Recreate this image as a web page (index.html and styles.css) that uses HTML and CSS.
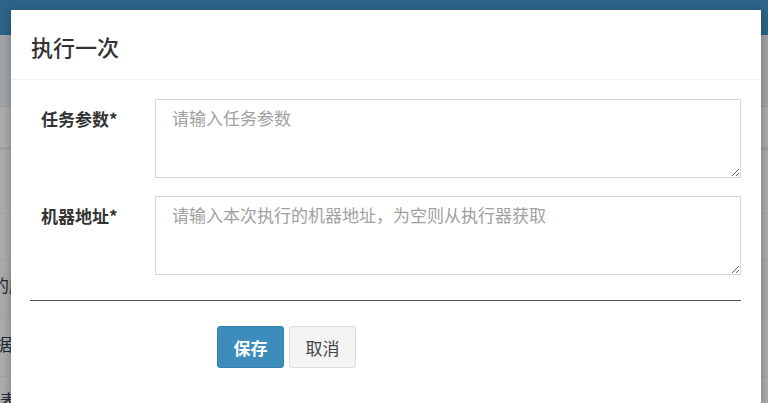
FILE: index.html
```html
<!DOCTYPE html>
<html lang="zh-CN">
  <head>
    <meta charset="UTF-8" />
    <meta name="viewport" content="width=device-width, initial-scale=1.0" />
    <title>执行一次</title>
    <link rel="stylesheet" href="styles.css">
  </head>
  <body>
    <!-- page behind the dialog (already dimmed by the backdrop) -->
    <div class="page">
      <div class="topbar"></div>
      <div class="content">
        <div class="box-head"></div>
        <div class="box">
          <div class="box-title"></div>
          <div class="row row-a"></div>
          <div class="row row-b"></div>
          <div class="row row-c"><span class="cell cell-c">目的服务</span></div>
          <div class="row row-d"><span class="cell cell-d">数据库</span></div>
          <div class="row row-e"><span class="cell cell-e">表名称</span></div>
        </div>
      </div>
    </div>

    <!-- Modal: 执行一次 -->
    <div class="modal-dialog">
      <div class="modal-header">
        <h4 class="modal-title">执行一次</h4>
      </div>
      <div class="modal-body">
        <form class="form">
          <div class="form-group">
            <label class="control-label">任务参数*</label>
            <textarea class="form-control" placeholder="请输入任务参数"></textarea>
          </div>
          <div class="form-group">
            <label class="control-label">机器地址*</label>
            <textarea class="form-control" placeholder="请输入本次执行的机器地址，为空则从执行器获取"></textarea>
          </div>
          <hr />
          <div class="actions">
            <button type="button" class="btn btn-primary">保存</button>
            <button type="button" class="btn btn-default">取消</button>
          </div>
        </form>
      </div>
    </div>
  </body>
</html>
```

FILE: styles.css
```css
/* Base */
html,
body {
  margin: 0;
  height: 100%;
  overflow: hidden;
}

body {
  font-family: "Noto Sans CJK SC", "Noto Sans", "Liberation Sans", sans-serif;
  color: #333;
  background-color: #a2a5a7;
}

/* Page under the backdrop */
.topbar {
  height: 35px;
  background-color: #2b6488;
}

.box-head {
  height: 71px;
  border-bottom: 1px solid #9c9fa1;
}

.box {
  background-color: #acacac;
}

.box-title {
  height: 40px;
  border-bottom: 3px solid #a0a0a0;
}

.row {
  border-bottom: 1px solid #a4a4a4;
  display: flex;
  align-items: center;
  font-size: 17px;
  color: #1f2a36;
}

.row-a {
  height: 63px;
}

.row-b {
  height: 45px;
}

.row-c {
  height: 59px;
  padding-bottom: 0;
  background-color: #a9a9a9;
}

.row-d {
  height: 56px;
}

.row-e {
  height: 40px;
  align-items: flex-start;
}

.cell {
  white-space: nowrap;
}

.cell-c {
  margin: 0 0 10px -25px;
}

.cell-d {
  margin: 0 0 10px -22px;
}

.cell-e {
  margin: 10px 0 0 0;
}

/* Modal */
.modal-dialog {
  position: absolute;
  top: 10px;
  left: 11px;
  width: 750px;
  bottom: -40px;
  background-color: #fff;
  box-shadow: 0 3px 9px rgba(0, 0, 0, 0.3);
}

.modal-header {
  padding: 20px 20px 17px;
  border-bottom: 1px solid #f0f0f0;
}

.modal-title {
  margin: 0;
  font-size: 22px;
  line-height: 32px;
  font-weight: 500;
  color: #333;
}

.modal-body {
  padding: 19px 20px 20px 19px;
}

.form-group {
  display: grid;
  grid-template-columns: 125px 1fr;
  margin-bottom: 18px;
}

.form-group:last-of-type {
  margin-bottom: 0;
}

.control-label {
  padding: 8px 0 0 11px;
  font-size: 17px;
  line-height: 24px;
  font-weight: bold;
  color: #333;
}

.form-control {
  box-sizing: border-box;
  height: 79px;
  margin: 0;
  padding: 6px 16px;
  border: 1px solid #d2d6de;
  border-radius: 0;
  font-family: inherit;
  font-size: 17px;
  line-height: 24px;
  color: #555;
  resize: vertical;
}

.form-control::placeholder {
  color: #a0a0a0;
}

hr {
  margin: 25px 0 0;
  border: 0;
  border-top: 1px solid #555;
}

.actions {
  display: flex;
  gap: 5px;
  margin: 25px 0 0 187px;
}

/* Buttons */
.btn {
  box-sizing: border-box;
  height: 42px;
  padding: 0 15px;
  border-radius: 3px;
  font-family: inherit;
  font-size: 17px;
  cursor: pointer;
}

.btn-primary {
  width: 67px;
  background-color: #3c8dbc;
  border: 1px solid #367fa9;
  color: #fff;
  font-weight: bold;
}

.btn-default {
  width: 67px;
  background-color: #f4f4f4;
  border: 1px solid #ddd;
  color: #444;
}
```
